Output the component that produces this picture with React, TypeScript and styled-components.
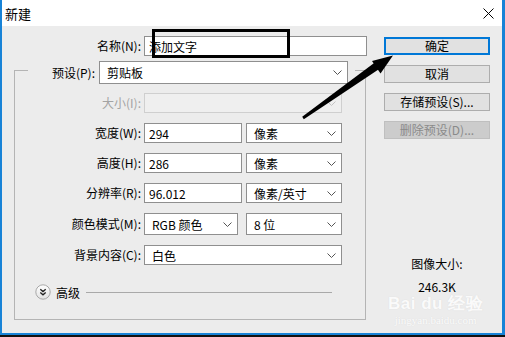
import React from 'react';
import styled, { createGlobalStyle } from 'styled-components';

const FONT = `"Noto Sans CJK SC", "Microsoft YaHei", "Noto Sans", sans-serif`;

const GlobalStyle = createGlobalStyle`
  html, body {
    margin: 0;
    padding: 0;
    background: #111;
  }
  body {
    font-family: ${FONT};
    font-size: 12px;
    color: #000;
  }
  * {
    box-sizing: border-box;
  }
`;

const Screen = styled.div`
  width: 505px;
  height: 337px;
  background: #111;
  overflow: hidden;
`;

const Window = styled.div`
  position: relative;
  width: 505px;
  height: 335px;
  display: flex;
  flex-direction: column;
  border-left: 2px solid #1883d7;
  border-right: 3px solid #1883d7;
  border-bottom: 2px solid #1883d7;
  background: #ececec;
`;

const TitleBar = styled.div`
  height: 26px;
  flex: none;
  background: #fff;
  display: flex;
  align-items: center;
  justify-content: space-between;
  padding: 0 8px 0 3px;
  font-size: 13px;
`;

const Body = styled.div`
  flex: 1;
  display: flex;
`;

const LeftCol = styled.div`
  width: 370px;
  display: flex;
  flex-direction: column;
  padding-top: 10px;
`;

const RightCol = styled.div`
  width: 106px;
  margin-left: 12px;
  padding-top: 11px;
  display: flex;
  flex-direction: column;
  align-items: center;
`;

const NameRow = styled.div`
  display: flex;
  align-items: center;
  gap: 3px;
`;

const Label = styled.div<{ $w: number; $disabled?: boolean }>`
  width: ${({ $w }) => $w}px;
  flex: none;
  text-align: right;
  white-space: nowrap;
  line-height: 20px;
  color: ${({ $disabled }) => ($disabled ? '#a3a3a3' : '#000')};
`;

const TextField = styled.input<{ $w: number }>`
  width: ${({ $w }) => $w}px;
  height: 20px;
  flex: none;
  margin: 0;
  padding: 0 4px;
  border: 1px solid #8f8f8f;
  background: #fff;
  font-family: ${FONT};
  font-size: 12px;
  color: #000;
  outline: none;
`;

const SelectBox = styled.div<{ $w: number; $h?: number; $disabled?: boolean }>`
  width: ${({ $w }) => $w}px;
  height: ${({ $h }) => $h ?? 20}px;
  flex: none;
  display: flex;
  align-items: center;
  justify-content: space-between;
  padding: 0 5px 0 7px;
  border: 1px solid ${({ $disabled }) => ($disabled ? '#cfcfcf' : '#8f8f8f')};
  background: ${({ $disabled }) => ($disabled ? '#efefef' : '#fff')};
  white-space: nowrap;
`;

const GroupBox = styled.div`
  margin-left: 12px;
  margin-top: 14px;
  width: 352px;
  height: 250px;
  border: 1px solid #b4b4b4;
  display: flex;
  flex-direction: column;
`;

const GroupHeader = styled.div`
  margin-top: -10px;
  margin-left: 13px;
  width: 327px;
  padding-right: 7px;
  display: flex;
  align-items: center;
  gap: 4px;
  background: #ececec;
`;

const Fields = styled.div`
  margin-top: 9px;
  display: flex;
  flex-direction: column;
  gap: 10px;
`;

const FieldRow = styled.div`
  display: flex;
  align-items: center;
  gap: 3px;
`;

const Controls = styled.div<{ $gap: number }>`
  display: flex;
  align-items: center;
  gap: ${({ $gap }) => $gap}px;
`;

const AdvancedRow = styled.div`
  margin-top: 19px;
  margin-left: 20px;
  display: flex;
  align-items: center;
  height: 16px;
`;

const AdvancedText = styled.span`
  margin-left: 5px;
  font-size: 12px;
`;

const Rule = styled.div`
  margin-left: 6px;
  width: 246px;
  height: 1px;
  background: #a9a9a9;
`;

const Button = styled.div<{ $primary?: boolean; $disabled?: boolean }>`
  width: 106px;
  height: 18px;
  margin-bottom: 10px;
  display: flex;
  align-items: center;
  justify-content: center;
  font-size: 12px;
  line-height: 1;
  background: ${({ $disabled }) => ($disabled ? '#cccccc' : '#e1e1e1')};
  color: ${({ $disabled }) => ($disabled ? '#8a8a8a' : '#000')};
  border: ${({ $primary, $disabled }) =>
    $primary ? '2px solid #0078d7' : $disabled ? '1px solid #bfbfbf' : '1px solid #adadad'};
`;

const InfoLabel = styled.div`
  margin-top: 107px;
  line-height: 16px;
  font-size: 12px;
`;

const InfoValue = styled.div`
  margin-top: 7px;
  line-height: 16px;
  font-size: 12px;
`;

const Watermark = styled.div`
  position: absolute;
  left: 386px;
  top: 294px;
  display: flex;
  flex-direction: column;
  align-items: center;
  color: rgba(255, 255, 255, 0.9);
  text-shadow: 0 0 1px rgba(190, 190, 190, 0.45);
  pointer-events: none;
`;

const WatermarkBrand = styled.div`
  font-family: "Liberation Sans", Arial, sans-serif;
  font-weight: bold;
  font-size: 17px;
  line-height: 20px;
  letter-spacing: 0.5px;
`;

const WatermarkUrl = styled.div`
  font-family: "Liberation Serif", serif;
  font-size: 11px;
  line-height: 13px;
`;

const Highlight = styled.div`
  position: absolute;
  left: 150px;
  top: 29px;
  width: 138px;
  height: 29px;
  border: 3px solid #000;
  pointer-events: none;
`;

const Overlay = styled.svg`
  position: absolute;
  left: -2px;
  top: 0;
  pointer-events: none;
`;

const Chevron = ({ color = '#555' }: { color?: string }) => (
  <svg width="9" height="5" viewBox="0 0 9 5">
    <path d="M0.5 0.5 L4.5 4.5 L8.5 0.5" fill="none" stroke={color} strokeWidth="1" />
  </svg>
);

const CloseIcon = () => (
  <svg width="11" height="11" viewBox="0 0 11 11">
    <path d="M0.5 0.5 L10.5 10.5 M10.5 0.5 L0.5 10.5" stroke="#000" strokeWidth="1" />
  </svg>
);

const ExpandIcon = () => (
  <svg width="16" height="16" viewBox="0 0 16 16">
    <defs>
      <linearGradient id="expbg" x1="0" y1="0" x2="0" y2="1">
        <stop offset="0" stopColor="#ffffff" />
        <stop offset="1" stopColor="#e2e2e2" />
      </linearGradient>
    </defs>
    <circle cx="8" cy="8" r="7.2" fill="url(#expbg)" stroke="#a8a8a8" strokeWidth="1" />
    <path d="M5.3 5.2 L8 7.6 L10.7 5.2 M5.3 8.4 L8 10.8 L10.7 8.4" fill="none" stroke="#222" strokeWidth="1.3" />
  </svg>
);

type Sel = { text: string; w: number; h?: number; disabled?: boolean };

const Select = ({ text, w, h, disabled }: Sel) => (
  <SelectBox $w={w} $h={h} $disabled={disabled}>
    <span>{text}</span>
    <Chevron color={disabled ? '#c4c4c4' : '#555'} />
  </SelectBox>
);

export default function App() {
  return (
    <Screen>
      <GlobalStyle />
      <Window>
        <TitleBar>
          <span>新建</span>
          <CloseIcon />
        </TitleBar>
        <Body>
          <LeftCol>
            <NameRow>
              <Label $w={139}>名称(N):</Label>
              <TextField $w={223} readOnly value="添加文字" />
            </NameRow>

            <GroupBox>
              <GroupHeader>
                <Label $w={67}>预设(P):</Label>
                <Select text="剪贴板" w={249} h={23} />
              </GroupHeader>

              <Fields>
                <FieldRow>
                  <Label $w={126} $disabled>大小(I):</Label>
                  <Select text="" w={198} disabled />
                </FieldRow>
                <FieldRow>
                  <Label $w={126}>宽度(W):</Label>
                  <Controls $gap={4}>
                    <TextField $w={98} readOnly value="294" />
                    <Select text="像素" w={96} />
                  </Controls>
                </FieldRow>
                <FieldRow>
                  <Label $w={126}>高度(H):</Label>
                  <Controls $gap={4}>
                    <TextField $w={98} readOnly value="286" />
                    <Select text="像素" w={96} />
                  </Controls>
                </FieldRow>
                <FieldRow>
                  <Label $w={126}>分辨率(R):</Label>
                  <Controls $gap={4}>
                    <TextField $w={98} readOnly value="96.012" />
                    <Select text="像素/英寸" w={96} />
                  </Controls>
                </FieldRow>
                <FieldRow>
                  <Label $w={126}>颜色模式(M):</Label>
                  <Controls $gap={8}>
                    <Select text="RGB 颜色" w={94} h={22} />
                    <Select text="8 位" w={96} h={22} />
                  </Controls>
                </FieldRow>
                <FieldRow>
                  <Label $w={126}>背景内容(C):</Label>
                  <Select text="白色" w={198} />
                </FieldRow>
              </Fields>

              <AdvancedRow>
                <ExpandIcon />
                <AdvancedText>高级</AdvancedText>
                <Rule />
              </AdvancedRow>
            </GroupBox>
          </LeftCol>

          <RightCol>
            <Button $primary>确定</Button>
            <Button>取消</Button>
            <Button>存储预设(S)...</Button>
            <Button $disabled>删除预设(D)...</Button>
            <InfoLabel>图像大小:</InfoLabel>
            <InfoValue>246.3K</InfoValue>
          </RightCol>
        </Body>

        <Highlight />
        <Overlay width="505" height="335" viewBox="0 0 505 335">
          <polygon points="302.2,116.8 303.8,119.2 379.2,69 374.8,62.6" fill="#000" />
          <polygon points="393,55.5 372,61 380.5,73.5" fill="#000" />
        </Overlay>
        <Watermark>
          <WatermarkBrand>Bai du 经验</WatermarkBrand>
          <WatermarkUrl>jingyan.baidu.com</WatermarkUrl>
        </Watermark>
      </Window>
    </Screen>
  );
}
